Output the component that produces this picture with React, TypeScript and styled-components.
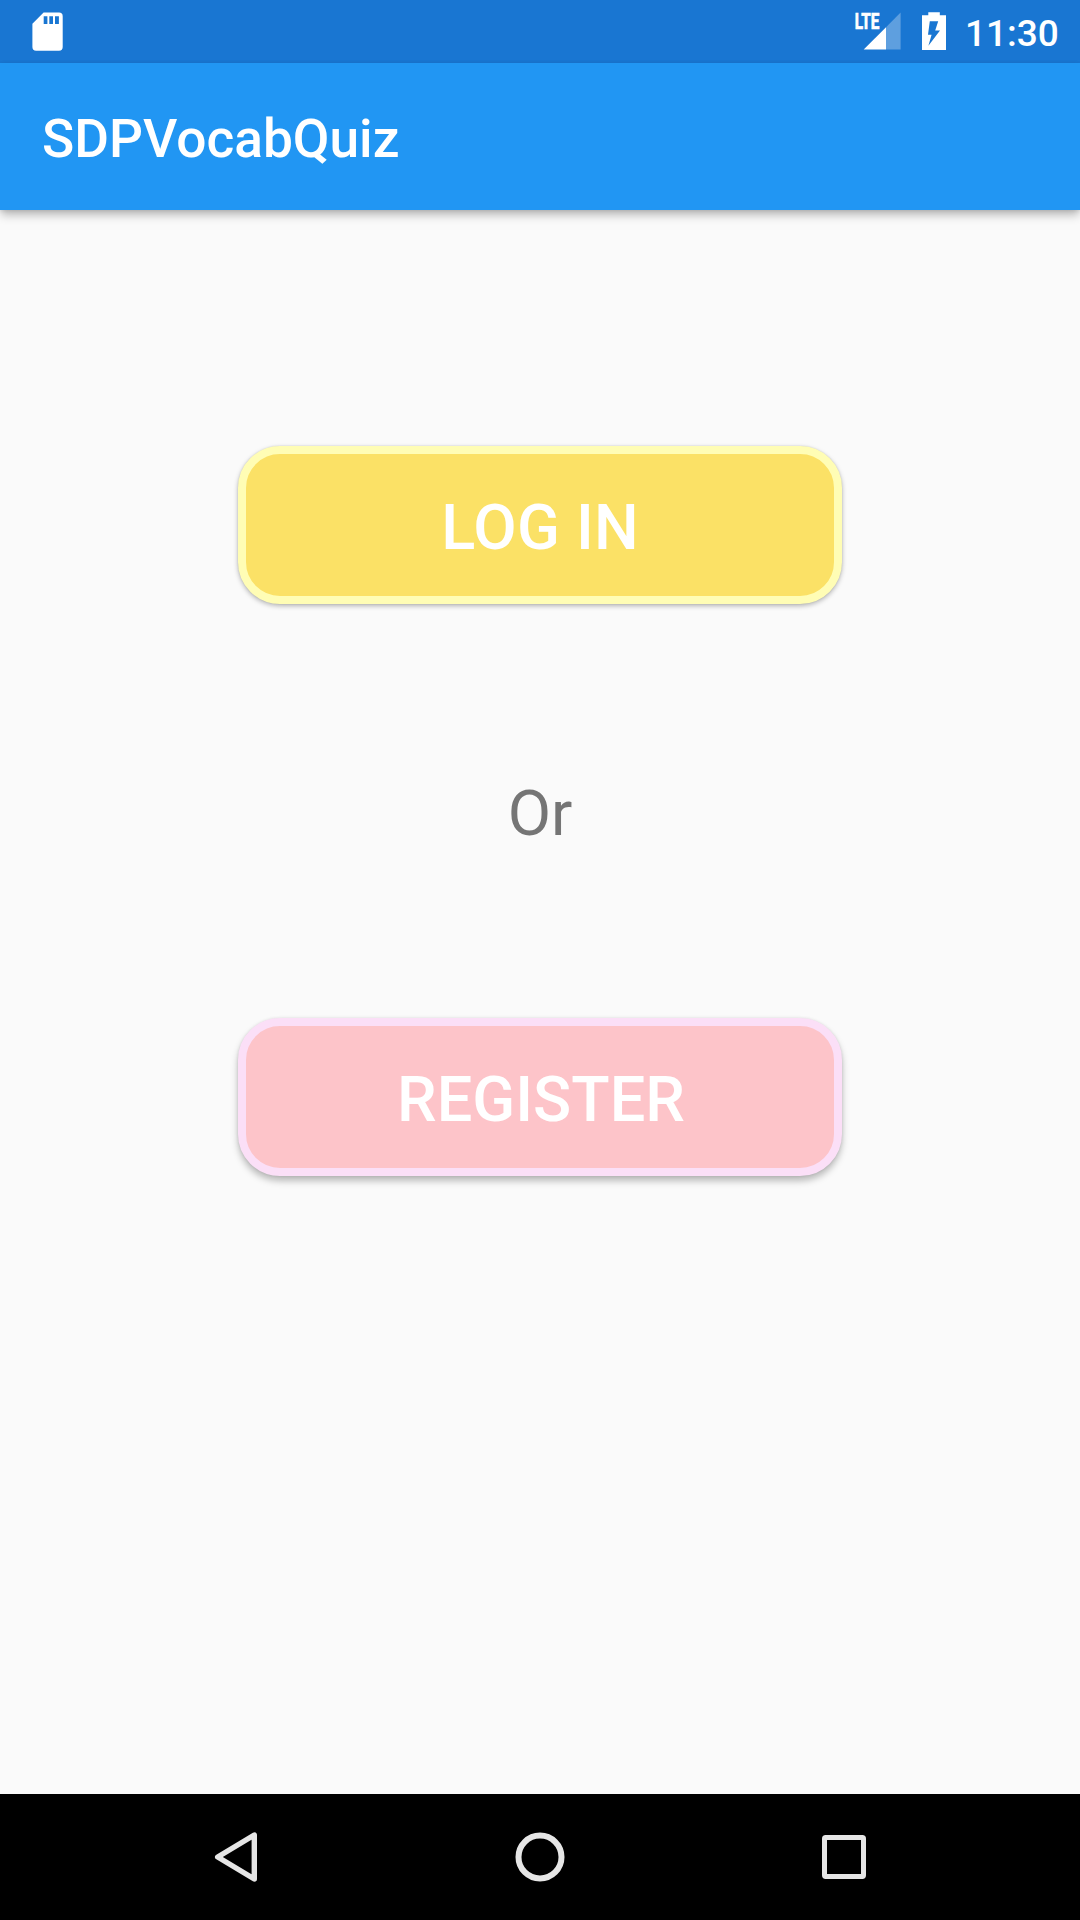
import React from "react";
import styled, { createGlobalStyle } from "styled-components";

const GlobalStyle = createGlobalStyle`
  html, body { margin: 0; padding: 0; background: #fafafa; }
  *, *::before, *::after { box-sizing: border-box; }
`;

const Screen = styled.div`
  display: flex;
  flex-direction: column;
  width: 1080px;
  height: 1920px;
  overflow: hidden;
  background: #fafafa;
  font-family: Roboto, "Liberation Sans", sans-serif;
`;

const StatusBar = styled.header`
  display: flex;
  align-items: flex-start;
  height: 63px;
  flex: none;
  padding: 0 22px 0 30px;
  background: #1976d2;
`;

const StatusIcons = styled.div`
  display: flex;
  margin-left: auto;
`;

const StatusSvg = styled.svg`
  display: block;
  flex: none;
`;

const Clock = styled.time`
  width: 93px;
  margin-left: 12px;
  padding-top: 2px;
  color: #fff;
  font-size: 37px;
  font-weight: 500;
  line-height: 63px;
  text-align: right;
`;

const AppBar = styled.div`
  display: flex;
  align-items: flex-start;
  flex: none;
  height: 147px;
  padding: 44px 42px 0;
  background: #2196f3;
  box-shadow: 0 6px 9px -1px rgba(0, 0, 0, 0.26), 0 1px 4px rgba(0, 0, 0, 0.1);
`;

const Title = styled.h1`
  margin: 0;
  color: #fff;
  font-size: 53.25px;
  font-weight: 500;
  line-height: 64px;
`;

const Content = styled.main`
  display: flex;
  flex: 1;
  flex-direction: column;
  align-items: center;
  padding-top: 236px;
`;

const ActionButton = styled.button<{ $fill: string; $edge: string; $raised?: boolean }>`
  display: flex;
  align-items: center;
  justify-content: center;
  width: 604px;
  height: 158px;
  padding: ${(p) => (p.$raised ? "5px 0 0 2px" : "5px 0 0")};
  border: 8px solid ${(p) => p.$edge};
  border-radius: 42px;
  background: ${(p) => p.$fill};
  color: #fff;
  font-family: inherit;
  font-size: 63px;
  font-weight: 500;
  line-height: 74px;
  letter-spacing: ${(p) => (p.$raised ? "0" : "0.2px")};
  text-transform: uppercase;
  box-shadow: ${(p) =>
    p.$raised
      ? "0 5px 7px rgba(0, 0, 0, 0.26), 0 0 3px rgba(0, 0, 0, 0.1)"
      : "0 2px 5px rgba(0, 0, 0, 0.28), 0 0 2px rgba(0, 0, 0, 0.12)"};
`;

const Divider = styled.p`
  display: flex;
  align-items: center;
  justify-content: center;
  height: 414px;
  margin: 0;
  padding-top: 5px;
  color: #757575;
  font-size: 63px;
  line-height: 74px;
`;

const NavBar = styled.nav`
  display: flex;
  align-items: center;
  justify-content: space-between;
  flex: none;
  height: 126px;
  padding: 0 206px;
  background: #000;
`;

const NavButton = styled.button`
  display: block;
  width: 60px;
  height: 60px;
  padding: 0;
  border: 0;
  background: none;
  svg { display: block; }
`;

const NavIcon = ({ children }: { children: React.ReactNode }) => (
  <svg width="60" height="60" viewBox="0 0 60 60" fill="none" stroke="#e6e6e6" strokeLinejoin="round">
    {children}
  </svg>
);

export default function App() {
  return (
    <>
      <GlobalStyle />
      <Screen>
        <StatusBar>
          <StatusSvg width="36" height="63" viewBox="30 0 36 63">
            <path
              fill="#fff"
              fillRule="evenodd"
              d="M43.6 12.6H59a3.7 3.7 0 0 1 3.7 3.7V47a3.7 3.7 0 0 1-3.7 3.7H36.1a3.7 3.7 0 0 1-3.7-3.7V23.8ZM43.7 16.3V24h3.7v-7.7ZM49.3 16.3V24H53v-7.7ZM55 16.3V24h3.9v-7.7Z"
            />
          </StatusSvg>
          <StatusIcons>
            <StatusSvg width="52" height="63" viewBox="853 0 52 63">
              <text
                x="854.8"
                y="29"
                fill="#fff"
                stroke="#fff"
                strokeWidth="0.7"
                fontFamily="Roboto, sans-serif"
                fontSize="21.5"
                fontWeight="700"
                textLength="24.6"
                lengthAdjust="spacingAndGlyphs"
              >
                LTE
              </text>
              <path fill="#fff" d="M863.7 49.5 886 27.2V49.5Z" />
              <path fill="#fff" fillOpacity=".3" d="M886 27.2 900.6 12.6V49.5H886Z" />
            </StatusSvg>
            <StatusSvg width="48" height="63" viewBox="905 0 48 63">
              <path
                fill="#fff"
                fillRule="evenodd"
                d="M928.3 12.2H939.8V15.3H946V50H922V15.3H928.3ZM929.8 21.2 928 34.8H931.6L928.4 45.8 940 30.4H935.2L938.2 21.2Z"
              />
            </StatusSvg>
            <Clock>11:30</Clock>
          </StatusIcons>
        </StatusBar>
        <AppBar>
          <Title>SDPVocabQuiz</Title>
        </AppBar>
        <Content>
          <ActionButton $fill="#fbe166" $edge="#fffdb5">Log in</ActionButton>
          <Divider>Or</Divider>
          <ActionButton $fill="#fdc4c9" $edge="#fbdff7" $raised>Register</ActionButton>
        </Content>
        <NavBar>
          <NavButton aria-label="Back">
            <NavIcon>
              <path strokeWidth="5.4" d="M11.7 30 48.3 8V52Z" />
            </NavIcon>
          </NavButton>
          <NavButton aria-label="Home">
            <NavIcon>
              <circle cx="30" cy="30" r="21.5" strokeWidth="6" />
            </NavIcon>
          </NavButton>
          <NavButton aria-label="Recent apps">
            <NavIcon>
              <rect x="10.5" y="10.5" width="39" height="39" rx="1.2" strokeWidth="5" />
            </NavIcon>
          </NavButton>
        </NavBar>
      </Screen>
    </>
  );
}
